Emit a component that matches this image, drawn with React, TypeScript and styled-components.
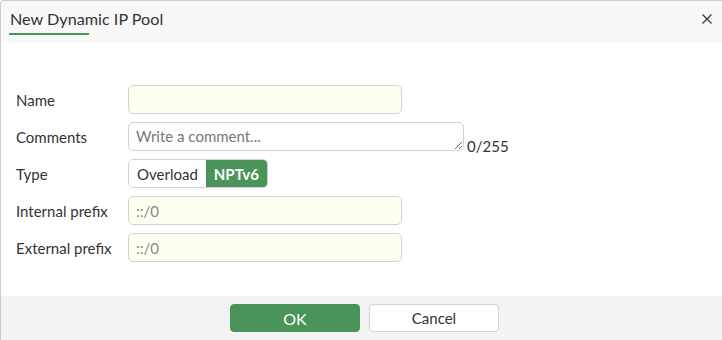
import React from 'react'
import styled, { createGlobalStyle } from 'styled-components'

const GlobalStyle = createGlobalStyle`
  html, body {
    margin: 0;
    padding: 0;
    background: #fff;
  }
  body {
    font-family: Lato, 'Noto Sans', sans-serif;
    color: #333;
  }
  * {
    box-sizing: border-box;
  }
`

const Dialog = styled.div`
  width: 722px;
  height: 340px;
  display: flex;
  flex-direction: column;
  border-top: 1px solid #cbcbcb;
  border-left: 1px solid #cbcbcb;
  border-top-left-radius: 4px;
  overflow: hidden;
`
const Header = styled.div`
  height: 42px;
  background: #f8f8f8;
  display: flex;
  justify-content: space-between;
  align-items: flex-start;
  padding: 0 0 0 8px;
`
const Title = styled.div`
  font-size: 16.2px;
  line-height: 20px;
  color: #333;
  padding: 8px 0 0 1px;
  &::after {
    content: '';
    display: block;
    width: 80px;
    height: 2px;
    margin: 4px 0 0 -1px;
    background: #4a9459;
  }
`
const CloseButton = styled.button`
  width: 30px;
  height: 36px;
  border: none;
  background: transparent;
  padding: 0;
  display: flex;
  align-items: center;
  justify-content: center;
  cursor: pointer;
`
const Body = styled.div`
  flex: 1;
  padding: 42px 0 0 15px;
`
const Form = styled.div`
  display: grid;
  grid-template-columns: 112px auto;
  row-gap: 8px;
  align-items: center;
`
const Label = styled.div`
  font-size: 15px;
  color: #333;
`
const Field = styled.div`
  display: flex;
  align-items: flex-end;
`
const TextInput = styled.input`
  width: 274px;
  height: 29px;
  border: 1px solid #d2d2d2;
  border-radius: 5px;
  background: #fefef0;
  padding: 0 7px;
  font-family: Lato, sans-serif;
  font-size: 15px;
  color: #888;
  outline: none;
  &::placeholder {
    color: #888;
  }
`
const CommentBox = styled.textarea`
  width: 336px;
  height: 29px;
  border: 1px solid #d2d2d2;
  border-radius: 5px;
  background: #fff;
  padding: 4px 7px;
  font-family: Lato, sans-serif;
  font-size: 15px;
  line-height: 19px;
  color: #333;
  outline: none;
  resize: both;
  display: block;
  &::placeholder {
    color: #777;
  }
`
const Counter = styled.span`
  font-size: 15px;
  color: #333;
  margin: 0 0 -4px 3px;
`
const Toggle = styled.div`
  display: inline-flex;
  height: 29px;
  border: 1px solid #d2d2d2;
  border-radius: 5px;
  overflow: hidden;
  justify-self: start;
`
const ToggleOption = styled.div<{ $active?: boolean }>`
  display: flex;
  align-items: center;
  padding: 0 8px;
  font-size: 15px;
  font-weight: ${p => (p.$active ? 700 : 400)};
  color: ${p => (p.$active ? '#fff' : '#333')};
  background: ${p => (p.$active ? '#4a9459' : '#fff')};
`
const Footer = styled.div`
  height: 44px;
  background: #f3f3f3;
  display: flex;
  justify-content: center;
  align-items: flex-start;
  gap: 9px;
  padding: 8px 0 0 6px;
`
const Button = styled.button<{ $primary?: boolean }>`
  width: 130px;
  height: 28px;
  border-radius: 4px;
  border: 1px solid ${p => (p.$primary ? '#4a9459' : '#d2d2d2')};
  background: ${p => (p.$primary ? '#4a9459' : '#fff')};
  color: ${p => (p.$primary ? '#fff' : '#333')};
  font-family: Lato, sans-serif;
  font-size: ${p => (p.$primary ? '16px' : '15px')};
  cursor: pointer;
`

const CloseIcon = () => (
  <svg width="10" height="10" viewBox="0 0 10 10">
    <path d="M0.5 0.5 L9.5 9.5 M9.5 0.5 L0.5 9.5" stroke="#333" strokeWidth="1.2" />
  </svg>
)

const App = (): JSX.Element => (
  <>
    <GlobalStyle />
    <Dialog>
      <Header>
        <Title>New Dynamic IP Pool</Title>
        <CloseButton aria-label={'close'}>
          <CloseIcon />
        </CloseButton>
      </Header>
      <Body>
        <Form>
          <Label>Name</Label>
          <Field>
            <TextInput />
          </Field>
          <Label>Comments</Label>
          <Field>
            <CommentBox placeholder={'Write a comment...'} />
            <Counter>0/255</Counter>
          </Field>
          <Label>Type</Label>
          <Toggle>
            <ToggleOption>Overload</ToggleOption>
            <ToggleOption $active>NPTv6</ToggleOption>
          </Toggle>
          <Label>Internal prefix</Label>
          <Field>
            <TextInput defaultValue={'::/0'} />
          </Field>
          <Label>External prefix</Label>
          <Field>
            <TextInput defaultValue={'::/0'} />
          </Field>
        </Form>
      </Body>
      <Footer>
        <Button $primary>OK</Button>
        <Button>Cancel</Button>
      </Footer>
    </Dialog>
  </>
)

export default App
